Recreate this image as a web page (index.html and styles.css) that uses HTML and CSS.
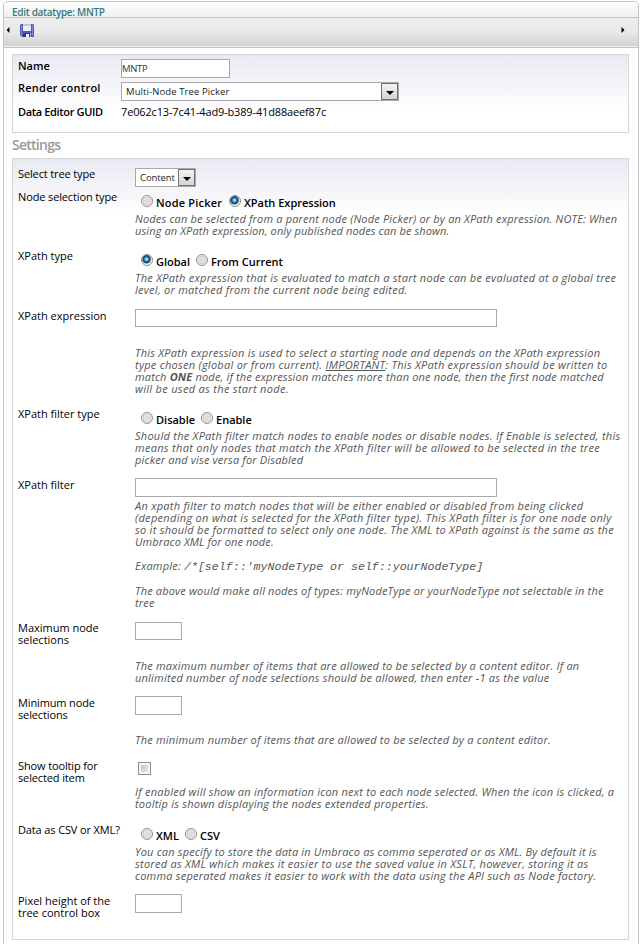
FILE: index.html
```html
<!DOCTYPE html>
<html lang="en">
<head>
<meta charset="utf-8">
<title>Edit datatype: MNTP</title>
<link rel="stylesheet" href="styles.css">
</head>
<body>
<div class="window">
  <h1 class="title">Edit datatype: MNTP</h1>
  <div class="toolbar">
    <svg class="arrow" width="4" height="6" viewBox="0 0 4 6"><path d="M3.5 0v6L0.5 3z"/></svg>
    <svg class="save" width="14" height="14" viewBox="0 0 14 14">
      <path d="M1 0h12l1 1v12H2l-2-2V1z" fill="#5559b5"/>
      <path d="M1 1h1v10H1zM12 1h1v11h-1z" fill="#7f88d8"/>
      <path d="M3 0h8v7H3z" fill="#e4effb"/>
      <path d="M3 0h8v2H3z" fill="#b8cbee"/>
      <path d="M3 9h7v4H3z" fill="#343b70"/>
      <path d="M6 10h3v3H6z" fill="#e9eef8"/>
      <path d="M10 9h1v4h-1z" fill="#a8b4e4"/>
    </svg>
    <svg class="arrow next" width="4" height="6" viewBox="0 0 4 6"><path d="M0.5 0v6l3-3z"/></svg>
  </div>
  <div class="content">
    <section class="panel general">
      <div class="field name"><span class="key">Name</span><span class="box name-box">MNTP</span></div>
      <div class="field render"><span class="key k2">Render control</span><span class="select wide"><span>Multi-Node Tree Picker</span><i></i></span></div>
      <div class="field guid"><span class="key k3">Data Editor GUID</span><span class="value">7e062c13-7c41-4ad9-b389-41d88aeef87c</span></div>
    </section>
    <h2>Settings</h2>
    <section class="panel settings">
      <div class="row r-tree"><label class="tight">Select tree type</label><div><span class="select"><span>Content</span><i></i></span></div></div>
      <div class="row r-node"><label class="tight">Node selection type</label><div>
        <div class="radios"><b class="radio"></b><span class="w67">Node Picker</span><b class="radio on"></b><span>XPath Expression</span></div>
        <p><span class="t2">Nodes can be selected from a parent node (Node Picker) or by an XPath expression. NOTE: When</span><br><span class="t1">using an XPath expression, only published nodes can be shown.</span></p></div></div>
      <div class="row r-type"><label>XPath type</label><div>
        <div class="radios"><b class="radio on"></b><span class="w34">Global</span><b class="radio"></b><span>From Current</span></div>
        <p class="t4">The XPath expression that is evaluated to match a start node can be evaluated at a global tree<br>level, or matched from the current node being edited.</p></div></div>
      <div class="row r-expr"><label>XPath expression</label><div>
        <div class="control gap"><span class="box long short"></span></div>
        <p>This XPath expression is used to select a starting node and depends on the XPath expression<br><span class="t4">type chosen (global or from current). <u>IMPORTANT</u>: This XPath expression should be written to</span><br><span class="t2">match <strong>ONE</strong> node, if the expression matches more than one node, then the first node matched</span><br><span class="t5">will be used as the start node.</span></p></div></div>
      <div class="row r-ftype"><label>XPath filter type</label><div>
        <div class="radios"><b class="radio"></b><span class="w38">Disable</span><b class="radio"></b><span>Enable</span></div>
        <p><span class="t4">Should the XPath filter match nodes to enable nodes or disable nodes. If Enable is selected, this</span><br><span class="t5">means that only nodes that match the XPath filter will be allowed to be selected in the tree</span><br><span class="t2">picker and vise versa for Disabled</span></p></div></div>
      <div class="row r-filter"><label>XPath filter</label><div>
        <div class="control"><span class="box long"></span></div>
        <p><span class="t4">An xpath filter to match nodes that will be either enabled or disabled from being clicked</span><br><span class="t5">(depending on what is selected for the XPath filter type). This XPath filter is for one node only</span><br><span class="t4">so it should be formatted to select only one node. The XML to XPath against is the same as the</span><br><span class="t1">Umbraco XML for one node.</span></p>
        <p class="example">Example: <code>/*[self::'myNodeType or self::yourNodeType]</code></p>
        <p class="example t2">The above would make all nodes of types: myNodeType or yourNodeType not selectable in the<br>tree</p></div></div>
      <div class="row r-max"><label>Maximum node<br>selections</label><div>
        <div class="control gap max"><span class="box small short"></span></div>
        <p>The maximum number of items that are allowed to be selected by a content editor. If an<br>unlimited number of node selections should be allowed, then enter -1 as the value</p></div></div>
      <div class="row r-min"><label class="tight">Minimum node<br>selections</label><div>
        <div class="control gap up"><span class="box small"></span></div>
        <p>The minimum number of items that are allowed to be selected by a content editor.</p></div></div>
      <div class="row r-tip"><label class="tight">Show tooltip for<br>selected item</label><div>
        <div class="control check"><span class="checkbox"></span></div>
        <p>If enabled will show an information icon next to each node selected. When the icon is clicked, a<br>tooltip is shown displaying the nodes extended properties.</p></div></div>
      <div class="row r-data"><label class="tight">Data as CSV or XML?</label><div>
        <div class="radios"><b class="radio"></b><span class="w22">XML</span><b class="radio"></b><span>CSV</span></div>
        <p><span class="t2">You can specify to store the data in Umbraco as comma seperated or as XML. By default it is</span><br><span class="t4">stored as XML which makes it easier to use the saved value in XSLT, however, storing it as</span><br>comma seperated makes it easier to work with the data using the API such as Node factory.</p></div></div>
      <div class="row"><label>Pixel height of the<br>tree control box</label><div>
        <div class="control up"><span class="box small"></span></div></div></div>
    </section>
  </div>
</div>
</body>
</html>
```
FILE: styles.css
```css
* { box-sizing: border-box; }
body {
  margin: 0;
  height: 944px;
  overflow: hidden;
  background: #fff;
  color: #000;
  font: 11px/12px "Trebuchet MS", "Open Sans", sans-serif;
  white-space: nowrap;
}
.window {
  margin: 1px 3px 0;
  width: 636px;
  height: 960px;
  border: 1px solid #c4c4c6;
  border-radius: 5px 5px 0 0;
  overflow: hidden;
}
.title {
  margin: 0;
  height: 16px;
  padding: 4px 0 0 8px;
  border-bottom: 1px solid #c6c6c6;
  background: linear-gradient(#fff, #f0f0f0);
  color: #357a80;
  font-size: 10px;
  font-weight: 600;
  line-height: 13px;
  letter-spacing: -0.3px;
}
.toolbar {
  display: flex;
  align-items: flex-start;
  height: 30px;
  padding: 5px 13px 0 2px;
  border-bottom: 1px solid #c2c2c2;
  background: linear-gradient(#efefef, #e8e8e8 50%, #d3d3d3 95%, #f0f0f0 96%);
}
.arrow { margin-top: 4px; }
.save { margin: 1px 0 0 10px; }
.next { margin-left: auto; }
.content { padding: 6px 9px 0 8px; }
.panel {
  border: 1px solid #d6d6da;
  background: linear-gradient(#e9e9f3, #fff 56px);
}
.general { height: 79px; padding: 4px 5px; }
.field { display: flex; align-items: flex-start; }
.name { height: 23px; }
.render { height: 23px; }
.key { width: 103px; font-weight: 600; line-height: 14px; }
.k2 { margin-top: -1px; letter-spacing: 0.25px; }
.k3 { letter-spacing: -0.35px; }
.value { line-height: 14px; letter-spacing: -0.15px; }
.box {
  display: block;
  height: 19px;
  border: 1px solid #a9a9ad;
  background: #fff;
}
.name-box {
  width: 109px;
  color: #333;
  font-size: 9.5px;
  line-height: 18px;
  letter-spacing: -0.3px;
}
.long { width: 362px; }
.small { width: 47px; }
.short { height: 18px; }
.select {
  display: flex;
  width: 61px;
  height: 19px;
  padding-left: 4px;
  border: 1px solid #a9a9ad;
  background: #fff;
  color: #222;
  font-size: 9.5px;
  line-height: 18px;
  letter-spacing: -0.1px;
}
.select i {
  display: grid;
  place-items: center;
  width: 17px;
  height: 17px;
  margin-left: auto;
  border: 1px solid #707074;
  background: linear-gradient(#f4f4f4, #d4d4d4);
}
.select i::after {
  content: "";
  margin-top: 3px;
  border: 4px solid transparent;
  border-top-color: #000;
  border-bottom: 0;
}
.wide { width: 278px; letter-spacing: 0.1px; }
h2 {
  margin: 4px 0 5px;
  color: #999;
  font: 600 14px/16px "Trebuchet MS", "Open Sans", sans-serif;
  letter-spacing: -0.75px;
}
.settings { height: 782px; padding: 9px 5px 0; }
.row { display: grid; grid-template-columns: 117px 1fr; }
.tight { letter-spacing: -0.13px; }
.r-tree { height: 23px; }
.r-node { height: 59px; }
.r-type { height: 60px; }
.r-expr { height: 98px; }
.r-ftype { height: 71px; }
.r-filter { height: 143px; }
.r-max { height: 75px; }
.r-min { height: 63px; }
.r-tip { height: 64px; }
.r-data { height: 71px; }
.radios {
  display: flex;
  height: 22px;
  padding: 4px 0 0 6px;
  font-weight: 600;
  line-height: 16px;
}
.radio {
  width: 12px;
  height: 12px;
  margin-right: 3px;
  border: 1px solid #8e8f91;
  border-radius: 50%;
  background: radial-gradient(circle, #dcdcdc 0 30%, #ececec 45%, #c9c9c9 54%, #f4f4f4 66%);
}
.radio.on { background: radial-gradient(circle at 45% 42%, #a8e4fa 0 10%, #2b80b4 26%, #123a5c 46%, #f4f4f4 60%); }
.w67 { width: 73px; letter-spacing: 0.2px; }
.w34 { width: 40px; }
.w38 { width: 45px; }
.w22 { width: 29px; }
.control { height: 21px; }
.gap { height: 37px; }
.gap .short { position: relative; top: -1px; }
.max { height: 38px; }
.max .short { top: 0; }
.up .box, .r-filter .box { position: relative; top: -1px; }
.check { height: 26px; padding: 2px 0 0 3px; }
.checkbox {
  display: block;
  width: 13px;
  height: 13px;
  border: 1px solid #8e8f8f;
  background: linear-gradient(135deg, #b4b9c2, #f4f4f4);
  box-shadow: inset 0 0 0 2px #f4f4f4;
}
p { margin: 0; color: #555; font-style: italic; letter-spacing: 0.22px; }
.t1 { letter-spacing: 0.115px; }
.t2 { letter-spacing: 0.17px; }
.t4 { letter-spacing: 0.265px; }
.t5 { letter-spacing: 0.31px; }
.example { margin-top: 12px; }
code {
  font: italic 11.6px/12px "Courier New", "Liberation Mono", monospace;
  letter-spacing: 0;
}
```
